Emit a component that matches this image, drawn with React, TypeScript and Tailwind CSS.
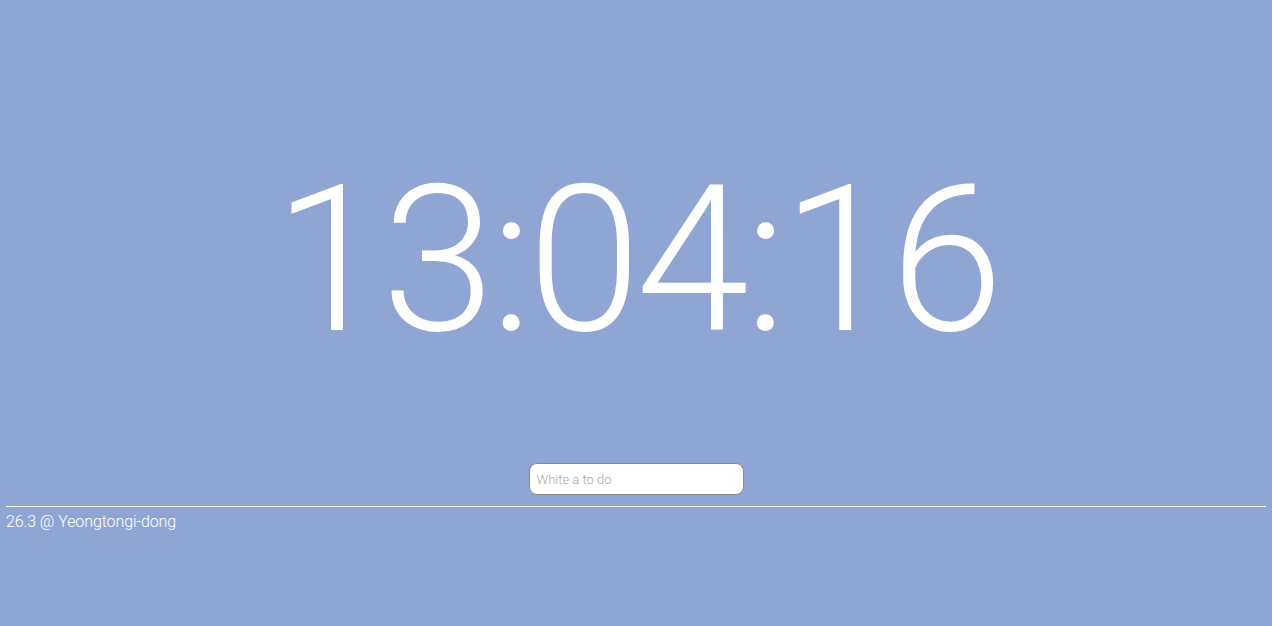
export default function App() {
  return (
    <div className="min-h-[626px] w-full bg-[#8fa5d3] px-[6px] font-['Roboto',sans-serif] font-light text-white">
      <div className="flex flex-col items-center pt-[137px]">
        <h1 className="text-[204px] leading-[248px] tracking-[-5px] font-light">13:04:16</h1>
        <input
          type="text"
          placeholder="White a to do"
          className="mt-[78px] h-[32px] w-[215px] rounded-[8px] border border-[#8a8a8a] bg-white px-[7px] pt-[1px] text-[13px] font-light text-gray-700 outline-none placeholder:text-[#a9a9a9]"
        />
      </div>
      <hr className="mt-[11px] border-t border-white" />
      <div className="pt-[5px] text-[16px] leading-[19px] tracking-[-0.1px]">26.3 @ Yeongtongi-dong</div>
    </div>
  );
}
